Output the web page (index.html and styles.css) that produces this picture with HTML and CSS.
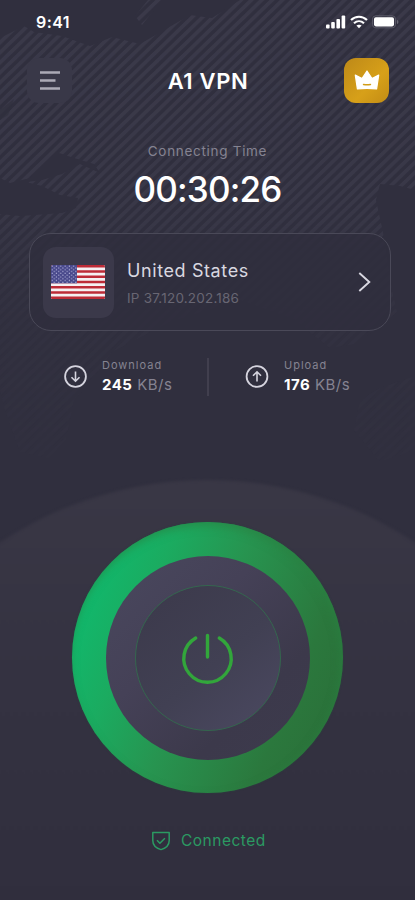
FILE: index.html
```html
<!DOCTYPE html>
<html lang="en">
<head>
<meta charset="utf-8">
<meta name="viewport" content="width=device-width, initial-scale=1">
<title>A1 VPN</title>
<link rel="stylesheet" href="styles.css">
</head>
<body>
<main class="screen">
  <svg class="backdrop" viewBox="0 0 415 900" aria-hidden="true">
    <defs>
      <pattern id="stripes" width="7.2" height="8" patternUnits="userSpaceOnUse" patternTransform="rotate(46)">
        <rect width="3.7" height="8" fill="#3b3a4a"/>
      </pattern>
      <linearGradient id="fade" x1="0" y1="0" x2="0" y2="1">
        <stop offset="0" stop-color="#fff" stop-opacity=".95"/>
        <stop offset=".42" stop-color="#fff" stop-opacity=".85"/>
        <stop offset=".65" stop-color="#fff" stop-opacity=".25"/>
        <stop offset="1" stop-color="#fff" stop-opacity=".1"/>
      </linearGradient>
      <mask id="fademask"><rect width="415" height="480" fill="url(#fade)"/></mask>
      <linearGradient id="dome" x1="0" y1="480" x2="0" y2="900" gradientUnits="userSpaceOnUse">
        <stop offset="0" stop-color="#393745"/>
        <stop offset=".45" stop-color="#343241"/>
        <stop offset="1" stop-color="#302e3d"/>
      </linearGradient>
    </defs>
    <g mask="url(#fademask)">
      <path fill="url(#stripes)" d="M0 38 24 26 34 32 62 36 90 46 112 37 140 44 166 29 190 15 212 18 240 0H415V190L400 186 380 184 376 200 383 232 392 290 397 312 380 326 355 344 330 348 312 334 296 320 240 300 170 322 112 352 92 380 74 400 66 440 48 458 20 452 5 410 0 390V214L20 216 62 213 76 208 78 198 60 195 42 186 26 182 42 180 62 174 80 164 100 173 94 164 74 158 56 152 30 178 10 183 0 178ZM148 0H162L142 25 135 16Z"/>
      <path fill="url(#stripes)" d="M360 400 380 388 415 376V450L380 462 354 430Z"/>
    </g>
    <path fill="#302f3e" opacity=".65" d="M0 110 14 99 8 115 0 120Z"/>
    <circle class="dome" cx="207.5" cy="856" r="376" fill="url(#dome)"/>
  </svg>

  <header class="status">
    <span class="clock">9:41</span>
    <span class="signals">
      <svg width="20" height="14" viewBox="0 0 20 14" fill="#fff"><rect y="9.4" width="3.6" height="4.2" rx="1"/><rect x="5.2" y="7" width="3.6" height="6.6" rx="1"/><rect x="10.4" y="4" width="3.6" height="9.6" rx="1"/><rect x="15.6" y=".6" width="3.6" height="13" rx="1"/></svg>
      <svg width="18" height="14" viewBox="0 0 18 14" fill="none" stroke="#fff" stroke-width="2.1"><path d="M1 5.1C5.6.6 12.4.6 17 5.1M4 8.3c3-2.8 7-2.8 10 0"/><path d="M6.4 10.6c1.5-1.3 3.7-1.3 5.2 0L9 13.2Z" fill="#fff" stroke="none"/></svg>
      <svg width="27" height="14" viewBox="0 0 27 14"><rect x=".5" y=".8" width="23" height="12" rx="3.3" fill="none" stroke="#5b5a68"/><rect x="2" y="2.2" width="20" height="9.2" rx="1.8" fill="#fff"/><path d="M25 5v4c1-.4 1.4-1 1.4-2S26 5.400 25 5Z" fill="#686773"/></svg>
    </span>
  </header>

  <nav class="topbar">
    <button class="tile menu" aria-label="Menu">
      <svg width="20" height="20" viewBox="0 0 20 20" fill="none" stroke="#acaab6" stroke-width="2.4"><path d="M0 1.500H20M0 9.500H15.500M0 17.500H20"/></svg>
    </button>
    <h1 class="title">A1 VPN</h1>
    <button class="tile premium" aria-label="Premium">
      <svg width="26" height="21" viewBox="0 0 26 21"><path fill="#fff" stroke="#fff" stroke-width="1.200" stroke-linejoin="round" d="M1.300 5.100 8 8.600 13 1 18 8.600 24.700 5.100 22.600 19Q13 17.800 3.400 19Z"/><path d="M9.600 14.500q3.400.6 6.800 0" fill="none" stroke="#d29d18" stroke-width="1.600" stroke-linecap="round"/></svg>
    </button>
  </nav>

  <section class="timer">
    <p class="timer-label">Connecting Time</p>
    <p class="timer-value">00:30:26</p>
  </section>

  <section class="server">
    <div class="flagbox">
      <svg width="54" height="34" viewBox="0 0 54 34">
        <defs>
          <clipPath id="flagclip"><rect width="54" height="34" rx="1.500"/></clipPath>
          <pattern id="stars" width="4.300" height="3.600" patternUnits="userSpaceOnUse"><circle cx="1.200" cy="1.100" r=".65" fill="#bcbce0"/><circle cx="3.350" cy="2.900" r=".65" fill="#bcbce0"/></pattern>
        </defs>
        <g clip-path="url(#flagclip)">
          <rect width="54" height="34" fill="#f5f0f2"/>
          <path stroke="#bd2b37" stroke-width="2.620" d="M0 1.310H54M0 6.540H54M0 11.770H54M0 17H54M0 22.230H54M0 27.460H54M0 32.690H54"/>
          <rect width="26" height="18.300" fill="#47478a"/>
          <rect width="26" height="18.300" fill="url(#stars)"/>
        </g>
      </svg>
    </div>
    <div class="server-info">
      <p class="country">United States</p>
      <p class="ip">IP 37.120.202.186</p>
    </div>
    <svg class="chevron" width="13" height="20" viewBox="0 0 13 20" fill="none" stroke="#d9d8e1" stroke-width="1.900"><path d="M1.300 1 11.300 10 1.300 19"/></svg>
  </section>

  <section class="stats">
    <div class="stat">
      <svg width="24" height="24" viewBox="0 0 24 24" fill="none" stroke="#d5d4de" stroke-width="1.800"><circle cx="12.500" cy="11.500" r="10.400"/><path d="M12.500 6.500V16M8.500 12.200l4 4 4-4" stroke-width="1.600"/></svg>
      <div><p class="stat-label">Download</p><p class="stat-value"><b>245</b> <span>KB/s</span></p></div>
    </div>
    <i class="divider"></i>
    <div class="stat">
      <svg width="24" height="24" viewBox="0 0 24 24" fill="none" stroke="#d5d4de" stroke-width="1.800"><circle cx="12" cy="11.500" r="10.400"/><path d="M12 16.500V7M8 10.800l4-4 4 4" stroke-width="1.600"/></svg>
      <div><p class="stat-label">Upload</p><p class="stat-value"><b>176</b> <span>KB/s</span></p></div>
    </div>
  </section>

  <button class="ring" aria-label="Disconnect">
    <span class="plate">
      <span class="dial">
        <svg width="60" height="60" viewBox="0 0 60 60" fill="none" stroke="#32a63b" stroke-width="3.400" stroke-linecap="round"><path d="M17.700 10A23.700 23.700 0 1 0 41.300 10M29.500 7.500V29"/></svg>
      </span>
    </span>
  </button>

  <footer class="state">
    <svg width="20" height="20" viewBox="0 0 20 20" fill="none" stroke="#2b9a62" stroke-width="1.500" stroke-linejoin="round"><path d="M1.800 1.600H18.200V9.500C18.200 14 14.500 17.300 10 18.600 5.500 17.300 1.800 14 1.800 9.500Z"/><path d="M6 9.300l2.900 3 5-5"/></svg>
    <span class="state-text">Connected</span>
  </footer>
</main>
</body>
</html>
```
FILE: styles.css
```css
* { box-sizing: border-box; }
body { margin: 0; background: #302e3d; font-family: Inter, "Open Sans", sans-serif; color: #fff; }
p, h1 { margin: 0; white-space: nowrap; }
button { border: 0; padding: 0; color: inherit; font: inherit; }
svg { display: block; flex: none; }

.screen { position: relative; isolation: isolate; width: 415px; height: 900px; overflow: hidden; display: flex; flex-direction: column; background: #302f3e; }
.backdrop { position: absolute; inset: 0; width: 415px; height: 900px; z-index: -1; }
.dome { filter: blur(1.5px); }

.status { height: 58px; padding: 10px 16px 0 36px; display: flex; justify-content: space-between; align-items: flex-start; }
.clock { font-size: 16px; line-height: 24px; font-weight: 600; letter-spacing: .4px; }
.signals { display: flex; gap: 4px; padding-top: 5px; }

.topbar { height: 45px; padding: 0 26px 0 27px; display: flex; justify-content: space-between; align-items: center; }
.tile { width: 45px; height: 45px; border-radius: 12px; display: grid; place-items: center; }
.menu { background: #393848; }
.premium { background: linear-gradient(135deg, #bd8918, #d7a019 60%, #c28c15); }
.title { font-size: 22px; line-height: 28px; font-weight: 600; letter-spacing: .65px; }

.timer { height: 130px; padding-top: 38px; text-align: center; }
.timer-label { font-size: 13.5px; line-height: 20px; letter-spacing: .7px; color: #858391; }
.timer-value { margin-top: 7px; font-size: 35px; line-height: 42px; font-weight: 500; letter-spacing: -.8px; }

.server { height: 98px; margin: 0 24px 0 29px; padding: 0 19px 0 13px; display: flex; align-items: center; border: 1px solid #4a4958; border-radius: 22px; background: rgba(48, 46, 61, .8); }
.flagbox { width: 71px; height: 71px; border-radius: 13px; display: grid; place-items: center; background: #3b394a; }
.flagbox svg { margin-right: 2px; }
.server-info { margin-left: 13px; padding-top: 2px; flex: 1; }
.country { font-size: 18px; line-height: 26px; letter-spacing: .6px; color: #d9d8e0; }
.ip { margin-top: 3px; font-size: 13.5px; line-height: 22px; letter-spacing: .2px; color: #686673; }

.stats { height: 78px; margin-top: 27px; padding-left: 63px; display: flex; align-items: flex-start; }
.stat { display: flex; gap: 15px; width: 144px; }
.stat svg { margin-top: 7px; }
.stat-label { font-size: 11px; line-height: 14px; letter-spacing: 1px; color: #858391; }
.stat-value { margin-top: 3px; font-size: 15px; line-height: 20px; letter-spacing: .5px; color: #858391; }
.stat-value b { font-weight: 700; color: #fff; }
.divider { width: 2px; height: 38px; margin-right: 36px; background: #413f4e; }

.ring { align-self: center; width: 271px; height: 271px; margin-top: 86px; border-radius: 50%; display: grid; place-items: center; background: linear-gradient(113deg, #10b96d 10%, #1bab60 28%, #279450 48%, #2b783d 76%, #2a6c37); box-shadow: inset -2px 4px 9px rgba(41, 129, 66, .65), 0 0 2px #29483f; }
.plate { width: 204px; height: 204px; border-radius: 50%; display: grid; place-items: center; background: linear-gradient(135deg, #48465c 10%, #454157 38%, #3c394b 72%, #3d3b4d); }
.dial { width: 146px; height: 146px; border-radius: 50%; border: 1px solid #34664e; display: grid; place-items: center; background: linear-gradient(140deg, #3d3b4d 15%, #414053 55%, #49475e 90%); }

.state { height: 24px; margin-top: 36px; padding-left: 151px; display: flex; align-items: center; gap: 10px; color: #2b9a62; }
.state-text { font-size: 15.5px; line-height: 24px; letter-spacing: .5px; }
```
